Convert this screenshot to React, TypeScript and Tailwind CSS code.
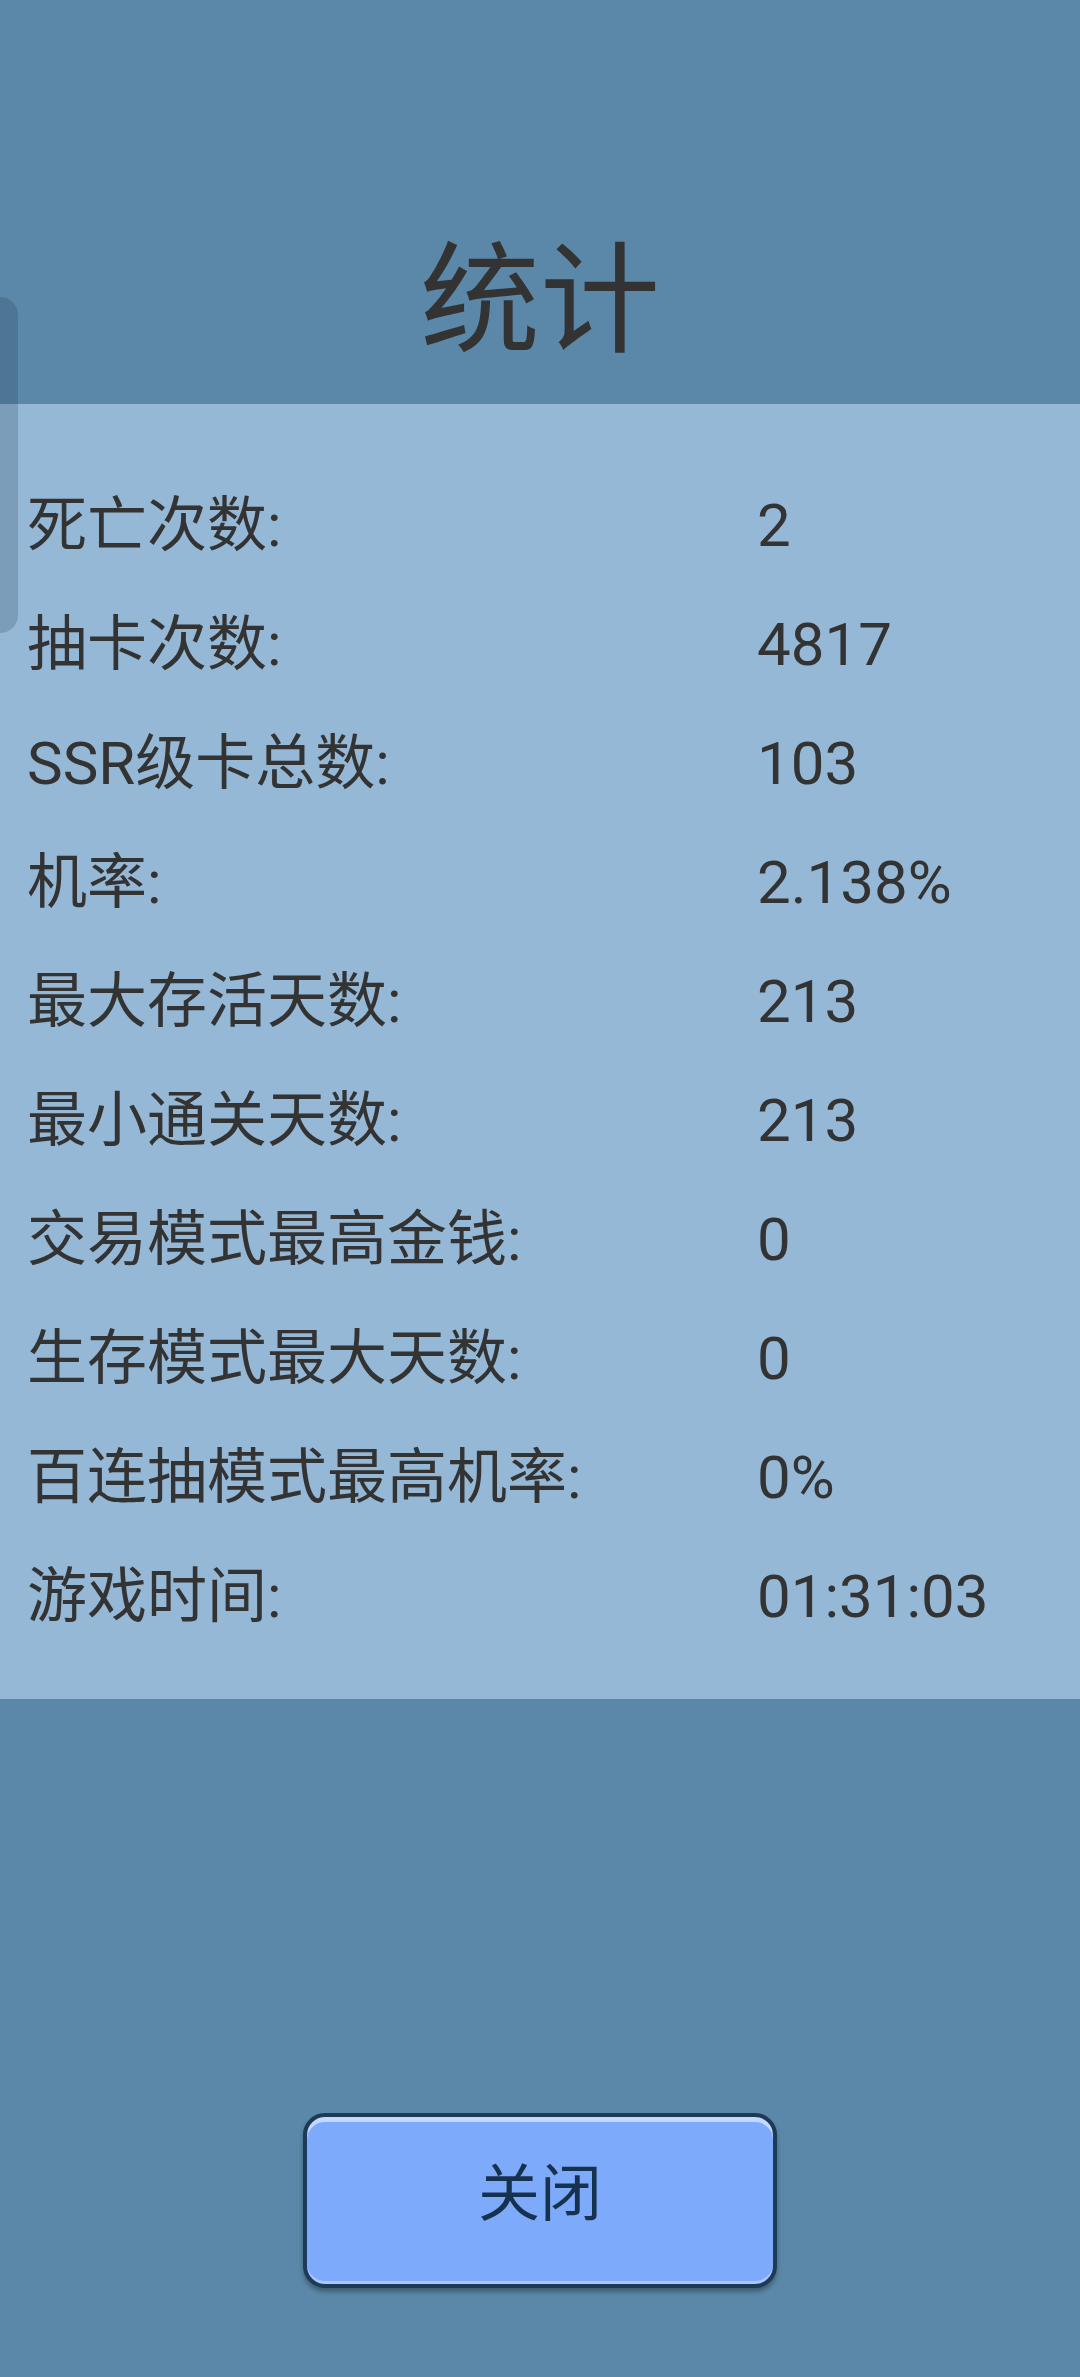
import React from 'react';

const stats = [
    { label: '死亡次数:', value: '2' },
    { label: '抽卡次数:', value: '4817' },
    { label: 'SSR级卡总数:', value: '103' },
    { label: '机率:', value: '2.138%' },
    { label: '最大存活天数:', value: '213' },
    { label: '最小通关天数:', value: '213' },
    { label: '交易模式最高金钱:', value: '0' },
    { label: '生存模式最大天数:', value: '0' },
    { label: '百连抽模式最高机率:', value: '0%' },
    { label: '游戏时间:', value: '01:31:03' },
];

export default function App() {
    return (
        <div
            className="relative w-[1080px] h-[2377px] bg-[#5b88a8] text-[#333333] overflow-hidden"
            style={{ fontFamily: 'Roboto, "Noto Sans CJK SC", sans-serif' }}
        >
            {/* Side handle */}
            <div className="absolute left-0 top-[297px] w-[18px] h-[336px] rounded-r-[18px] bg-[#17334a]/20" />

            {/* Header */}
            <div className="h-[404px] flex justify-center pt-[242px]">
                <h1 className="text-[120px] leading-none">统计</h1>
            </div>

            {/* Stats panel */}
            <div className="bg-[#94b8d5] pt-[62px] pb-[43px] pl-[27px]">
                {stats.map((s) => (
                    <div key={s.label} className="h-[119px] flex items-center text-[60px] leading-none">
                        <span className="w-[730px]">{s.label}</span>
                        <span>{s.value}</span>
                    </div>
                ))}
            </div>

            {/* Close button */}
            <div className="flex justify-center pt-[414px]">
                <button className="w-[474px] h-[175px] rounded-[22px] border-[4px] border-[#1d3a57] bg-[#7eaafc] text-[#17324e] text-[62px] leading-none pb-[12px] shadow-[inset_0_5px_0_rgba(255,255,255,0.55),inset_0_-3px_0_rgba(255,255,255,0.35),0_4px_4px_rgba(0,0,0,0.3)]">
                    关闭
                </button>
            </div>
        </div>
    );
}
